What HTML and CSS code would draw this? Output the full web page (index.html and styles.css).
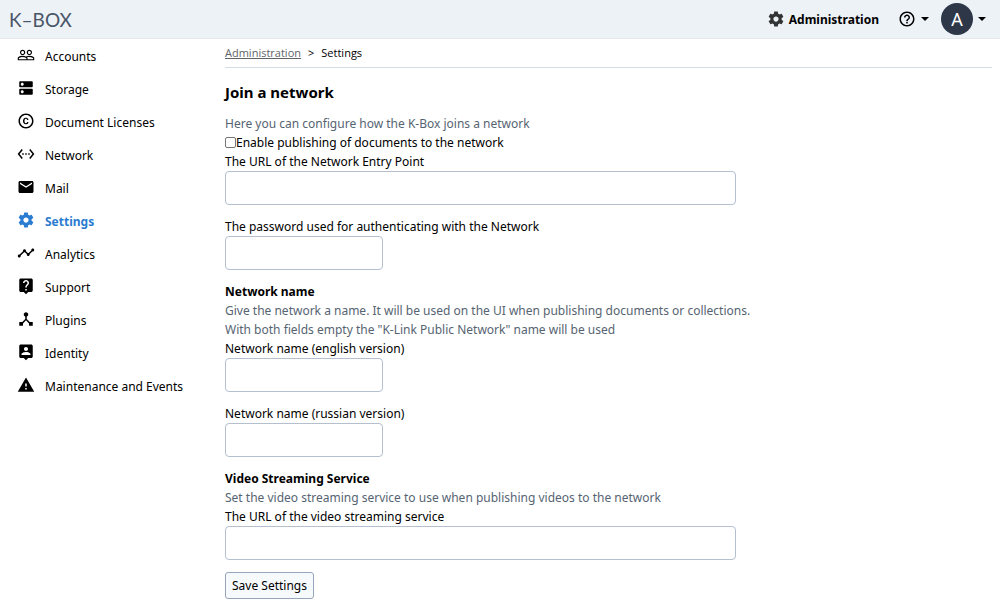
FILE: index.html
```html
<!DOCTYPE html>
<html lang="en">
<head>
<meta charset="utf-8">
<meta name="viewport" content="width=device-width, initial-scale=1">
<title>Settings - K-Box</title>
<link rel="stylesheet" href="styles.css">
</head>
<body>
<header class="topbar">
  <a class="logo" href="#">K–BOX</a>
  <div class="topbar-actions">
    <a class="admin-link" href="#">
      <svg class="icon icon-dark" viewBox="0 0 24 24"><path d="M19.43 12.98c.04-.32.07-.64.07-.98s-.03-.66-.07-.98l2.11-1.65c.19-.15.24-.42.12-.64l-2-3.46c-.12-.22-.39-.3-.61-.22l-2.49 1c-.52-.4-1.08-.73-1.69-.98l-.38-2.65A.49.49 0 0 0 14 2h-4c-.25 0-.46.18-.49.42l-.38 2.65c-.61.25-1.17.59-1.69.98l-2.49-1c-.23-.09-.49 0-.61.22l-2 3.46c-.13.22-.07.49.12.64l2.11 1.65c-.04.32-.07.65-.07.98s.03.66.07.98l-2.11 1.65c-.19.15-.24.42-.12.64l2 3.46c.12.22.39.3.61.22l2.49-1c.52.4 1.08.73 1.69.98l.38 2.65c.03.24.24.42.49.42h4c.25 0 .46-.18.49-.42l.38-2.65c.61-.25 1.17-.59 1.69-.98l2.49 1c.23.09.49 0 .61-.22l2-3.46c.12-.22.07-.49-.12-.64l-2.11-1.65zM12 15.5c-1.93 0-3.500-1.570-3.500-3.500s1.570-3.500 3.500-3.500 3.500 1.570 3.500 3.500-1.570 3.500-3.500 3.500z"/></svg>
      <span>Administration</span>
    </a>
    <button class="menu-button" type="button" aria-label="Help">
      <svg class="icon" viewBox="0 0 24 24"><path d="M11 18h2v-2h-2v2zm1-16C6.480 2 2 6.480 2 12s4.480 10 10 10 10-4.480 10-10S17.520 2 12 2zm0 18c-4.410 0-8-3.590-8-8s3.590-8 8-8 8 3.590 8 8-3.590 8-8 8zm0-14c-2.210 0-4 1.790-4 4h2c0-1.100.9-2 2-2s2 .9 2 2c0 2-3 1.750-3 5h2c0-2.250 3-2.500 3-5 0-2.210-1.790-4-4-4z"/></svg>
      <span class="caret"></span>
    </button>
    <button class="menu-button" type="button" aria-label="User menu">
      <span class="avatar">A</span>
      <span class="caret"></span>
    </button>
  </div>
</header>
<div class="layout">
  <nav class="sidebar" aria-label="Administration">
    <a class="nav-item" href="#"><svg class="icon" viewBox="0 0 24 24"><path d="M16.500 13c-1.200 0-3.070.34-4.500 1-1.430-.67-3.300-1-4.500-1C5.330 13 1 14.080 1 16.250V19h22v-2.750c0-2.170-4.330-3.250-6.500-3.250zm-4 4.500h-10v-1.250c0-.54 2.560-1.750 5-1.750s5 1.210 5 1.750v1.250zm9 0H14v-1.250c0-.46-.2-.86-.52-1.220.88-.3 1.960-.53 3.020-.53 2.440 0 5 1.210 5 1.750v1.250zM7.500 12c1.930 0 3.500-1.570 3.500-3.500S9.430 5 7.500 5 4 6.570 4 8.500 5.570 12 7.500 12zm0-5.500c1.100 0 2 .9 2 2s-.9 2-2 2-2-.9-2-2 .9-2 2-2zm9 5.500c1.930 0 3.500-1.570 3.500-3.500S18.430 5 16.500 5 13 6.570 13 8.500s1.570 3.500 3.500 3.500zm0-5.500c1.100 0 2 .9 2 2s-.9 2-2 2-2-.9-2-2 .9-2 2-2z"/></svg><span>Accounts</span></a>
    <a class="nav-item" href="#"><svg class="icon" viewBox="0 0 24 24"><path d="M20 13H4c-.55 0-1 .45-1 1v6c0 .55.45 1 1 1h16c.55 0 1-.45 1-1v-6c0-.55-.45-1-1-1zM7 19c-1.100 0-2-.9-2-2s.9-2 2-2 2 .9 2 2-.9 2-2 2zM20 3H4c-.55 0-1 .45-1 1v6c0 .55.45 1 1 1h16c.55 0 1-.45 1-1V4c0-.55-.45-1-1-1zM7 9c-1.100 0-2-.9-2-2s.9-2 2-2 2 .9 2 2-.9 2-2 2z"/></svg><span>Storage</span></a>
    <a class="nav-item" href="#"><svg class="icon" viewBox="0 0 24 24"><path d="M10.080 10.860c.05-.33.16-.62.3-.87s.34-.46.59-.62c.24-.15.54-.22.91-.23.23.01.44.05.63.13.2.09.38.21.52.36s.25.33.34.53.13.42.14.64h1.790c-.02-.47-.11-.9-.28-1.290s-.4-.73-.7-1.010-.66-.5-1.080-.66-.88-.23-1.390-.23c-.65 0-1.220.11-1.700.34s-.88.53-1.200.92-.56.84-.71 1.360S8 11.290 8 11.870v.27c0 .58.08 1.120.23 1.640s.39.97.71 1.350.72.69 1.200.91 1.050.34 1.700.34c.47 0 .91-.08 1.320-.23s.77-.36 1.080-.63.56-.58.74-.94.29-.74.3-1.150h-1.790c-.01.21-.06.4-.15.58s-.21.33-.36.46-.32.23-.52.3c-.19.07-.39.09-.6.1-.36-.01-.66-.08-.89-.23-.25-.16-.45-.37-.59-.62s-.25-.55-.3-.88-.08-.67-.08-1v-.27c0-.35.03-.68.08-1.010zM12 2C6.480 2 2 6.480 2 12s4.480 10 10 10 10-4.480 10-10S17.520 2 12 2zm0 18c-4.410 0-8-3.590-8-8s3.590-8 8-8 8 3.590 8 8-3.590 8-8 8z"/></svg><span>Document Licenses</span></a>
    <a class="nav-item" href="#"><svg class="icon" viewBox="0 0 24 24"><path d="M7.770 6.760L6.230 5.480.82 12l5.410 6.520 1.540-1.280L3.420 12l4.350-5.240zM7 13h2v-2H7v2zm10-2h-2v2h2v-2zm-6 2h2v-2h-2v2zm6.770-7.520l-1.540 1.280L20.580 12l-4.350 5.240 1.540 1.280L23.180 12l-5.410-6.520z"/></svg><span>Network</span></a>
    <a class="nav-item" href="#"><svg class="icon" viewBox="0 0 24 24"><path d="M20 4H4c-1.100 0-1.990.9-1.990 2L2 18c0 1.100.9 2 2 2h16c1.100 0 2-.9 2-2V6c0-1.100-.9-2-2-2zm0 4l-8 5-8-5V6l8 5 8-5v2z"/></svg><span>Mail</span></a>
    <a class="nav-item nav-item-active" href="#" aria-current="page"><svg class="icon" viewBox="0 0 24 24"><path d="M19.43 12.98c.04-.32.07-.64.07-.98s-.03-.66-.07-.98l2.11-1.65c.19-.15.24-.42.12-.64l-2-3.46c-.12-.22-.39-.3-.61-.22l-2.49 1c-.52-.4-1.08-.73-1.69-.98l-.38-2.65A.49.49 0 0 0 14 2h-4c-.25 0-.46.18-.49.42l-.38 2.65c-.61.25-1.17.59-1.69.98l-2.49-1c-.23-.09-.49 0-.61.22l-2 3.46c-.13.22-.07.49.12.64l2.11 1.65c-.04.32-.07.65-.07.98s.03.66.07.98l-2.11 1.65c-.19.15-.24.42-.12.64l2 3.46c.12.22.39.3.61.22l2.49-1c.52.4 1.08.73 1.69.98l.38 2.65c.03.24.24.42.49.42h4c.25 0 .46-.18.49-.42l.38-2.65c.61-.25 1.17-.59 1.69-.98l2.49 1c.23.09.49 0 .61-.22l2-3.46c.12-.22.07-.49-.12-.64l-2.11-1.65zM12 15.500c-1.930 0-3.500-1.570-3.500-3.500s1.570-3.500 3.500-3.500 3.500 1.570 3.500 3.500-1.570 3.500-3.500 3.500z"/></svg><span>Settings</span></a>
    <a class="nav-item" href="#"><svg class="icon" viewBox="0 0 24 24"><path d="M23 8c0 1.100-.9 2-2 2-.18 0-.35-.02-.51-.07l-3.560 3.550c.05.16.07.34.07.52 0 1.100-.9 2-2 2s-2-.9-2-2c0-.18.02-.36.07-.52l-2.550-2.550c-.16.05-.34.07-.52.07s-.36-.02-.52-.07l-4.550 4.560c.05.16.07.33.07.51 0 1.100-.9 2-2 2s-2-.9-2-2 .9-2 2-2c.18 0 .35.02.51.07l4.560-4.550C8.020 9.360 8 9.180 8 9c0-1.100.9-2 2-2s2 .9 2 2c0 .18-.02.36-.07.52l2.550 2.550c.16-.05.34-.07.52-.07s.36.02.52.07l3.550-3.560C19.020 8.350 19 8.180 19 8c0-1.100.9-2 2-2s2 .9 2 2z"/></svg><span>Analytics</span></a>
    <a class="nav-item" href="#"><svg class="icon" viewBox="0 0 24 24"><path d="M19 2H5c-1.110 0-2 .9-2 2v14c0 1.100.89 2 2 2h4l3 3 3-3h4c1.100 0 2-.9 2-2V4c0-1.100-.9-2-2-2zm-6 16h-2v-2h2v2zm2.070-7.750l-.9.920C13.450 11.900 13 12.500 13 14h-2v-.5c0-1.100.45-2.100 1.170-2.830l1.240-1.260c.37-.36.59-.86.59-1.410 0-1.100-.9-2-2-2s-2 .9-2 2H8c0-2.210 1.790-4 4-4s4 1.790 4 4c0 .88-.36 1.680-.93 2.250z"/></svg><span>Support</span></a>
    <a class="nav-item" href="#"><svg class="icon" viewBox="0 0 24 24"><path d="M17 16l-4-4V8.820C14.160 8.400 15 7.300 15 6c0-1.660-1.340-3-3-3S9 4.340 9 6c0 1.300.84 2.400 2 2.820V12l-4 4H3v5h5v-3.050l4-4.200 4 4.200V21h5v-5h-4z"/></svg><span>Plugins</span></a>
    <a class="nav-item" href="#"><svg class="icon" viewBox="0 0 24 24"><path d="M19 2H5c-1.110 0-2 .9-2 2v14c0 1.100.89 2 2 2h4l3 3 3-3h4c1.100 0 2-.9 2-2V4c0-1.100-.9-2-2-2zm-7 3.300c1.490 0 2.700 1.210 2.700 2.700s-1.210 2.700-2.700 2.700S9.300 9.490 9.300 8s1.210-2.700 2.700-2.700zM18 16H6v-.9c0-2 4-3.100 6-3.100s6 1.100 6 3.100v.9z"/></svg><span>Identity</span></a>
    <a class="nav-item" href="#"><svg class="icon" viewBox="0 0 24 24"><path d="M1 21h22L12 2 1 21zm12-3h-2v-2h2v2zm0-4h-2v-4h2v4z"/></svg><span>Maintenance and Events</span></a>
  </nav>
  <main class="content">
    <nav class="breadcrumb" aria-label="Breadcrumb">
      <a class="breadcrumb-link" href="#">Administration</a>
      <span>&gt;</span>
      <span>Settings</span>
    </nav>
    <h1 class="page-title">Join a network</h1>
    <form class="settings-form">
      <section>
        <p class="hint">Here you can configure how the K-Box joins a network</p>
        <div class="check-row">
          <input class="checkbox" type="checkbox" id="enable-publishing">
          <label for="enable-publishing">Enable publishing of documents to the network</label>
        </div>
        <div class="field">
          <label for="network-url">The URL of the Network Entry Point</label>
          <input class="input input-wide" type="text" id="network-url">
        </div>
        <div class="field">
          <label for="network-password">The password used for authenticating with the Network</label>
          <input class="input" type="password" id="network-password">
        </div>
      </section>
      <section>
        <h2 class="section-title">Network name</h2>
        <p class="hint">Give the network a name. It will be used on the UI when publishing documents or collections.<br>With both fields empty the "K-Link Public Network" name will be used</p>
        <div class="field">
          <label for="name-en">Network name (english version)</label>
          <input class="input" type="text" id="name-en">
        </div>
        <div class="field">
          <label for="name-ru">Network name (russian version)</label>
          <input class="input" type="text" id="name-ru">
        </div>
      </section>
      <section>
        <h2 class="section-title">Video Streaming Service</h2>
        <p class="hint">Set the video streaming service to use when publishing videos to the network</p>
        <div class="field">
          <label for="video-url">The URL of the video streaming service</label>
          <input class="input input-wide" type="text" id="video-url">
        </div>
      </section>
      <button class="save-button" type="submit">Save Settings</button>
    </form>
  </main>
</div>
</body>
</html>
```

FILE: styles.css
```css
* {
  box-sizing: border-box;
}

body {
  margin: 0;
  background: #fff;
  color: #000;
  font-family: "Noto Sans", "Open Sans", sans-serif;
  font-size: 12px;
  line-height: 19px;
}

a {
  color: inherit;
  text-decoration: none;
}

h1, h2, p {
  margin: 0;
}

.icon {
  flex: none;
  width: 18px;
  height: 18px;
  fill: currentColor;
}

.icon-dark {
  color: #333;
}

.topbar {
  display: flex;
  align-items: center;
  justify-content: space-between;
  height: 39px;
  padding: 0 14px 0 9px;
  background: #edf2f7;
  border-bottom: 1px solid #e4e8ec;
}

.logo {
  color: #4a5568;
  font-family: Lato, sans-serif;
  font-size: 19px;
}

.topbar-actions {
  display: flex;
  align-items: center;
  gap: 12px;
}

.admin-link {
  display: flex;
  align-items: center;
  gap: 4px;
  margin-right: 7px;
  font-weight: 700;
}

.menu-button {
  display: flex;
  align-items: center;
  gap: 5px;
  padding: 0;
  border: 0;
  background: none;
  color: #000;
  font: inherit;
}

.caret {
  border-top: 4px solid #000;
  border-left: 4px solid transparent;
  border-right: 4px solid transparent;
}

.avatar {
  display: flex;
  align-items: center;
  justify-content: center;
  width: 32px;
  height: 32px;
  border-radius: 50%;
  background: #2d3748;
  color: #fff;
  font-size: 18px;
}

.layout {
  display: grid;
  grid-template-columns: 208px minmax(0, 1fr);
  gap: 17px;
  padding-right: 8px;
}

.sidebar {
  padding-left: 17px;
}

.nav-item {
  display: flex;
  align-items: flex-start;
  gap: 10px;
  height: 33px;
  padding-top: 7px;
}

.nav-item span {
  padding-top: 1px;
}

.nav-item-active {
  color: #2b7cd0;
  font-weight: 700;
}

.breadcrumb {
  display: flex;
  gap: 7px;
  padding: 4px 0 5px;
  border-bottom: 1px solid #d3dce6;
  font-family: "Open Sans", "Noto Sans", sans-serif;
  font-size: 11px;
}

.breadcrumb-link {
  color: #606468;
  text-decoration: underline;
}

.page-title {
  padding: 15px 0 12px;
  font-size: 15px;
  line-height: 19px;
}

.hint {
  color: #566472;
}

.check-row {
  display: flex;
  align-items: center;
}

.checkbox {
  width: 11px;
  height: 11px;
  margin: 0;
  appearance: none;
  border: 1px solid #767676;
  border-radius: 2px;
  background: #fff;
}

.field {
  display: flex;
  flex-direction: column;
  align-items: flex-start;
  margin-bottom: 12px;
}

.input {
  width: 158px;
  height: 34px;
  padding: 6px 8px;
  border: 1px solid #b4bfd0;
  border-radius: 4px;
  background: #fff;
  font: inherit;
}

.input-wide {
  width: 66.667%;
}

.section-title {
  font-size: 12px;
  line-height: 19px;
}

.save-button {
  padding: 3px 6px;
  border: 1px solid #97a5ba;
  border-radius: 3px;
  background: #f7fafc;
  color: #000;
  font: inherit;
}
```
